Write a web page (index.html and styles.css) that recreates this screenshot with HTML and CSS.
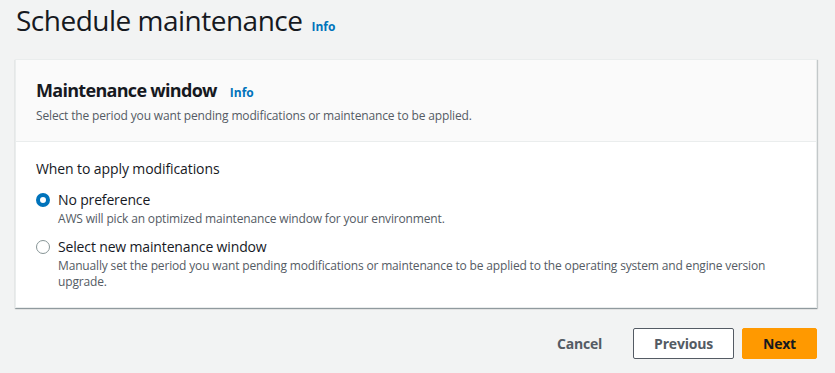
FILE: index.html
```html
<!DOCTYPE html>
<html lang="en">
  <head>
    <meta charset="UTF-8" />
    <meta name="viewport" content="width=device-width, initial-scale=1.0" />
    <title>Schedule maintenance</title>
    <link rel="stylesheet" href="styles.css">
  </head>
  <body>
    <div class="page">
      <div class="page-header">
        <h1>Schedule maintenance</h1>
        <a class="info-link" href="#">Info</a>
      </div>

      <div class="card">
        <div class="card-header">
          <div class="card-title">
            <h2>Maintenance window</h2>
            <a class="info-link" href="#">Info</a>
          </div>
          <p class="card-description">
            Select the period you want pending modifications or maintenance to be applied.
          </p>
        </div>

        <div class="card-body">
          <div class="field-label">When to apply modifications</div>

          <label class="radio-option">
            <input type="radio" name="window" value="none" checked />
            <span class="radio-mark"></span>
            <span class="radio-text">
              <span class="radio-label">No preference</span>
              <span class="radio-description">AWS will pick an optimized maintenance window for your environment.</span>
            </span>
          </label>

          <label class="radio-option">
            <input type="radio" name="window" value="new" />
            <span class="radio-mark"></span>
            <span class="radio-text">
              <span class="radio-label">Select new maintenance window</span>
              <span class="radio-description">Manually set the period you want pending modifications or maintenance to be applied to the operating system and engine version upgrade.</span>
            </span>
          </label>
        </div>
      </div>

      <div class="actions">
        <button class="btn btn-link">Cancel</button>
        <button class="btn btn-normal">Previous</button>
        <button class="btn btn-primary">Next</button>
      </div>
    </div>
  </body>
</html>
```

FILE: styles.css
```css
body {
  margin: 0;
  padding: 0;
  background: #f2f3f3;
  font-family: "Open Sans", "Noto Sans", sans-serif;
  color: #16191f;
}

.page {
  padding: 0 18px 0 15px;
}

/* Page title */
.page-header {
  display: flex;
  align-items: baseline;
  gap: 9px;
  padding: 0 0 0 1px;
  height: 59px;
}

h1 {
  font-size: 28px;
  font-weight: 400;
  margin: 0;
  line-height: 40px;
  letter-spacing: -0.5px;
}

.info-link {
  color: #0073bb;
  font-size: 12px;
  font-weight: 700;
  text-decoration: none;
}

/* Container card */
.card {
  background: #fff;
  border: 1px solid #eaeded;
  box-shadow: 0 1px 1px 0 rgba(0, 28, 36, 0.3), 1px 1px 1px 0 rgba(0, 28, 36, 0.15);
}

.card-header {
  background: #fafafa;
  border-bottom: 1px solid #eaeded;
  padding: 18px 20px 16px;
}

.card-title {
  display: flex;
  align-items: baseline;
  gap: 13px;
}

h2 {
  font-size: 18px;
  font-weight: 700;
  margin: 0;
  line-height: 24px;
  letter-spacing: -0.7px;
}

.card-description {
  margin: 5px 0 0;
  font-size: 12px;
  line-height: 18px;
  color: #545b64;
  letter-spacing: -0.15px;
}

.card-body {
  padding: 16px 20px 17px;
}

.field-label {
  font-size: 14px;
  line-height: 22px;
  margin-bottom: 8px;
  letter-spacing: -0.1px;
}

/* Radio buttons */
.radio-option {
  display: flex;
  gap: 8px;
  margin-bottom: 8px;
  cursor: pointer;
}

.radio-option:last-child {
  margin-bottom: 0;
}

.radio-option input {
  display: none;
}

.radio-mark {
  flex: none;
  width: 14px;
  height: 14px;
  margin-top: 5px;
  box-sizing: border-box;
  border: 1px solid #879596;
  border-radius: 50%;
  background: #fff;
}

.radio-option input:checked + .radio-mark {
  border: 4px solid #0073bb;
}

.radio-text {
  display: flex;
  flex-direction: column;
}

.radio-label {
  font-size: 14px;
  line-height: 23px;
  letter-spacing: -0.15px;
}

.radio-description {
  font-size: 12px;
  line-height: 16px;
  color: #545b64;
  letter-spacing: -0.16px;
}

/* Footer buttons */
.actions {
  display: flex;
  justify-content: flex-end;
  align-items: center;
  gap: 8px;
  margin-top: 20px;
}

.btn {
  font-family: inherit;
  font-size: 14px;
  font-weight: 700;
  line-height: 21px;
  padding: 4px 20px;
  border-radius: 2px;
  letter-spacing: -0.2px;
  cursor: pointer;
}

.btn-link {
  background: none;
  border: 1px solid transparent;
  color: #545b64;
  margin-right: 2px;
}

.btn-normal {
  background: #fff;
  border: 1px solid #545b64;
  color: #545b64;
}

.btn-primary {
  background: #ff9900;
  border: 1px solid #ff9900;
  color: #16191f;
}
```
